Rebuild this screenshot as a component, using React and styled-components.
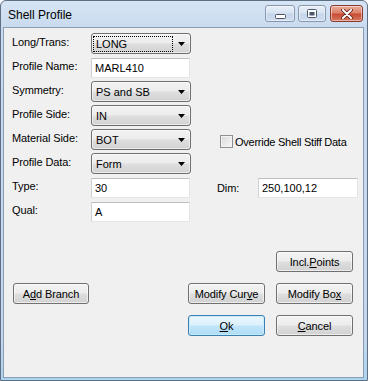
import React from "react";
import styled, { createGlobalStyle } from "styled-components";

const Global = createGlobalStyle`
  * { box-sizing: border-box; }
  html, body { margin: 0; padding: 0; background: #fff; }
  body { font-family: "Liberation Sans", Arial, sans-serif; font-size: 11px; color: #000; }
`;

const Window = styled.div`
  width: 368px;
  height: 381px;
  border: 1px solid #5f6f84;
  border-radius: 6px 6px 0 0;
  background: linear-gradient(#d6e5f5 0px, #c8daef 28px, #c4d7ee 340px, #a9d4ef 381px);
  display: flex;
  flex-direction: column;
  padding: 0 3px 2px 2px;
  overflow: hidden;
`;

const TitleBar = styled.div`
  height: 26px;
  flex: none;
  display: flex;
  align-items: flex-start;
  justify-content: space-between;
`;

const Title = styled.div`
  padding: 7px 0 0 5px;
  font-size: 12px;
  line-height: 14px;
  color: #000;
`;

const CaptionGroup = styled.div`
  display: flex;
  margin-top: 4px;
  margin-right: 1px;
`;

const CaptionButton = styled.div`
  width: ${(p) => p.$w}px;
  height: 17px;
  margin-left: ${(p) => p.$gap}px;
  border: 1px solid ${(p) => (p.$close ? "#8d3b2d" : "#8797ad")};
  border-radius: 3px;
  background: ${(p) =>
    p.$close
      ? "linear-gradient(#e9ac9b, #dc826c 45%, #c94b33 55%, #d47a62)"
      : "linear-gradient(#e9f0f9, #d8e3f1 45%, #c5d5ea 55%, #d2def0)"};
  box-shadow: inset 0 0 0 1px rgba(255, 255, 255, 0.45);
  display: flex;
  align-items: center;
  justify-content: center;
`;

const Client = styled.div`
  flex: 1;
  background: #f0f0f0;
  border: 1px solid #8a9db5;
  display: flex;
  flex-direction: column;
`;

const Form = styled.div`
  display: grid;
  grid-template-columns: 79px 100px 26px 41px 100px;
  grid-auto-rows: 24px;
  padding: 5px 0 0 8px;
`;

const Label = styled.div`
  grid-column: ${(p) => p.$col || 1};
  margin-top: ${(p) => p.$top ?? 2}px;
  line-height: 14px;
  white-space: nowrap;
  letter-spacing: -0.1px;
`;

const Combo = styled.div`
  grid-column: 2;
  width: 100px;
  height: 21px;
  border: 1px solid #707070;
  border-radius: 3px;
  background: linear-gradient(#f3f3f3 0%, #ececec 48%, #dedede 52%, #d2d2d2 100%);
  box-shadow: inset 0 0 0 1px rgba(255, 255, 255, 0.55);
  display: flex;
  align-items: center;
  padding-left: 1px;
`;

const ComboText = styled.div`
  flex: 1;
  height: 16px;
  line-height: 14px;
  padding-left: 2px;
  margin-top: 1px;
  border: 1px ${(p) => (p.$focus ? "dotted #000" : "solid transparent")};
`;

const Arrow = styled.svg`
  width: 7px;
  height: 4px;
  margin: 1px 5px 0 5px;
  flex: none;
`;

const TextBox = styled.div`
  grid-column: ${(p) => p.$col || 2};
  width: ${(p) => p.$w || 99}px;
  height: 20px;
  margin-top: 1px;
  background: #fff;
  border: 1px solid;
  border-color: #bcbfc4 #e1e4e8 #e3e6ea #cfd2d6;
  line-height: 16px;
  padding-left: 3px;
  padding-top: 1px;
`;

const CheckRow = styled.label`
  grid-column: 4 / span 2;
  display: flex;
  align-items: center;
  gap: 2px;
  margin: 6px 0 0 3px;
  height: 13px;
  white-space: nowrap;
  letter-spacing: -0.25px;
`;

const CheckBox = styled.span`
  width: 13px;
  height: 13px;
  border: 1px solid #8e8f8f;
  background: linear-gradient(135deg, #d9d9d9, #f7f7f7);
  box-shadow: inset 0 0 0 1px #f4f4f4;
  flex: none;
`;

const ButtonArea = styled.div`
  display: flex;
  flex-direction: column;
  gap: 11px;
  margin-top: 26px;
  padding: 0 10px 0 9px;
`;

const ButtonRow = styled.div`
  display: flex;
  gap: 11px;
  justify-content: flex-end;
`;

const Spacer = styled.div`
  flex: 1;
`;

const Button = styled.button`
  width: ${(p) => p.$w || 77}px;
  height: 21px;
  padding: 0;
  font: 11px "Liberation Sans", Arial, sans-serif;
  letter-spacing: -0.1px;
  color: #000;
  border: 1px solid ${(p) => (p.$default ? "#3c7fb1" : "#707070")};
  border-radius: 3px;
  background: ${(p) =>
    p.$default
      ? "linear-gradient(#ebf6fd 0%, #dcf1fc 48%, #c2e6fb 52%, #addcf6 100%)"
      : "linear-gradient(#f3f3f3 0%, #ececec 48%, #dedede 52%, #d1d1d1 100%)"};
  box-shadow: inset 0 0 0 1px
    ${(p) => (p.$default ? "rgba(200,235,252,0.9)" : "rgba(255,255,255,0.6)")};
  u { text-decoration: underline; text-underline-offset: 1px; }
`;

const DropArrow = () => (
  <Arrow viewBox="0 0 7 4">
    <path d="M0 0H7L3.5 4Z" fill="#000" />
  </Arrow>
);

const Select = ({ value, focus }) => (
  <Combo>
    <ComboText $focus={focus}>{value}</ComboText>
    <DropArrow />
  </Combo>
);

export default function App() {
  return (
    <>
      <Global />
      <Window>
        <TitleBar>
          <Title>Shell Profile</Title>
          <CaptionGroup>
            <CaptionButton $w={30} $gap={0}>
              <svg width="11" height="6" viewBox="0 0 11 6" style={{ marginTop: 6 }}>
                <rect x="0.5" y="0.5" width="10" height="4" rx="1" fill="#fff" stroke="#4a5568" />
              </svg>
            </CaptionButton>
            <CaptionButton $w={28} $gap={3}>
              <svg width="10" height="9" viewBox="0 0 10 9">
                <rect x="0.5" y="0.5" width="9" height="8" rx="1" fill="#fff" stroke="#4a5568" />
                <rect x="2.5" y="3" width="5" height="3.5" fill="#4a5568" />
              </svg>
            </CaptionButton>
            <CaptionButton $w={33} $gap={4} $close>
              <svg width="12" height="10" viewBox="0 0 12 10">
                <path d="M2 1L10 9M10 1L2 9" stroke="#5a1f16" strokeWidth="3.6" strokeLinecap="round" />
                <path d="M2 1L10 9M10 1L2 9" stroke="#fff" strokeWidth="2" strokeLinecap="round" />
              </svg>
            </CaptionButton>
          </CaptionGroup>
        </TitleBar>
        <Client>
          <Form>
            <Label>Long/Trans:</Label>
            <Select value="LONG" focus />

            <Label>Profile Name:</Label>
            <TextBox>MARL410</TextBox>

            <Label>Symmetry:</Label>
            <Select value="PS and SB" />

            <Label>Profile Side:</Label>
            <Select value="IN" />

            <Label>Material Side:</Label>
            <Select value="BOT" />
            <CheckRow>
              <CheckBox />
              Override Shell Stiff Data
            </CheckRow>

            <Label>Profile Data:</Label>
            <Select value="Form" />

            <Label>Type:</Label>
            <TextBox>30</TextBox>
            <Label $col={4} $top={4}>Dim:</Label>
            <TextBox $col={5} $w={100}>250,100,12</TextBox>

            <Label>Qual:</Label>
            <TextBox>A</TextBox>
          </Form>
          <ButtonArea>
            <ButtonRow>
              <Button>
                Incl.<u>P</u>oints
              </Button>
            </ButtonRow>
            <ButtonRow>
              <Button $w={76}>
                A<u>d</u>d Branch
              </Button>
              <Spacer />
              <Button>
                Modify Cur<u>v</u>e
              </Button>
              <Button>
                Modify Bo<u>x</u>
              </Button>
            </ButtonRow>
            <ButtonRow>
              <Button $default>
                <u>O</u>k
              </Button>
              <Button>
                <u>C</u>ancel
              </Button>
            </ButtonRow>
          </ButtonArea>
        </Client>
      </Window>
    </>
  );
}
